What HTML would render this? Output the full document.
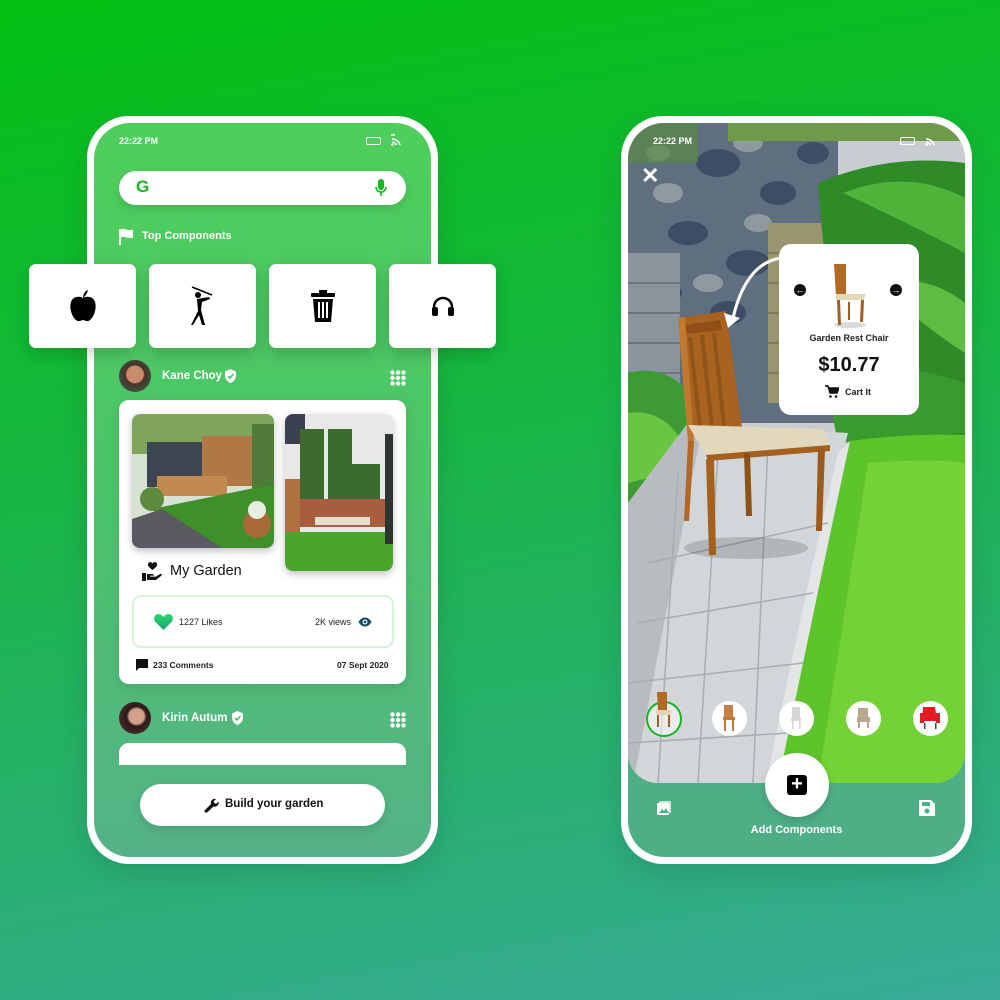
<!DOCTYPE html>
<html><head><meta charset="utf-8"><style>
*{margin:0;padding:0;box-sizing:border-box}
body{width:1000px;height:1000px;overflow:hidden;font-family:"Liberation Sans",sans-serif;background:linear-gradient(170deg,#03c013 0%,#14b83a 35%,#27b06c 70%,#38ab98 100%);position:relative}
.abs{position:absolute}
.frame{position:absolute;background:#fff;border-radius:42px;box-shadow:0 10px 30px rgba(0,0,0,.12)}
.lin{position:absolute;left:94px;top:123px;width:337px;height:734px;border-radius:36px;background:linear-gradient(180deg,#4ecf5b 0%,#4cc46a 50%,#55b287 100%);overflow:hidden}
.w{color:#fff}
.tile{position:absolute;top:264px;width:107px;height:84px;background:#fff;border-radius:7px;box-shadow:0 6px 16px rgba(0,0,0,.18);display:flex;align-items:center;justify-content:center}
.sm{font-size:9px;font-weight:bold}
</style></head><body>

<!-- LEFT PHONE -->
<div class="frame" style="left:87px;top:116px;width:351px;height:748px"></div>
<div class="lin">
  <div class="abs w sm" style="left:25px;top:13px;font-size:9px">22:22 PM</div>
  <div class="abs" style="left:272px;top:14px;width:15px;height:8px;border:1.5px solid #fff;border-radius:2px"></div>
  <svg class="abs" style="left:296px;top:11px" width="14" height="12" viewBox="0 0 14 12"><path d="M2 5a8 8 0 0 1 8 6M2 8a4 4 0 0 1 4 3" stroke="#fff" stroke-width="1.6" fill="none"/><circle cx="2.5" cy="10.5" r="1.3" fill="#fff"/><path d="M1 1h4" stroke="#fff" stroke-width="1.5"/></svg>
  <div class="abs" style="left:25px;top:48px;width:287px;height:34px;background:#fff;border-radius:17px;box-shadow:0 4px 10px rgba(0,0,0,.12)"></div>
  <div class="abs" style="left:42px;top:54px;color:#12b81e;font-weight:bold;font-size:17px">G</div>
  <svg class="abs" style="left:281px;top:56px" width="12" height="18" viewBox="0 0 12 18"><rect x="3" y="0" width="6" height="11" rx="3" fill="#12b81e"/><path d="M1 8a5 5 0 0 0 10 0M6 13v4" stroke="#12b81e" stroke-width="1.6" fill="none"/></svg>
  <svg class="abs" style="left:25px;top:105px" width="16" height="17" viewBox="0 0 16 17"><path d="M1 1v16" stroke="#fff" stroke-width="2"/><path d="M2 1.5c4-2 6 2 12 0v8c-6 2-8-2-12 0z" fill="#fff"/></svg>
  <div class="abs w" style="left:48px;top:107px;font-size:11px;font-weight:bold">Top Components</div>

  <div class="abs" style="left:25px;top:237px;width:32px;height:32px;border-radius:50%;background:radial-gradient(circle at 50% 45%,#c88b6b 0 35%,#4a3226 40%,#2f6a5a 100%)"></div>
  <div class="abs w" style="left:68px;top:247px;font-size:11.5px;font-weight:bold">Kane Choy</div>
  <svg class="abs" style="left:130px;top:246px" width="13" height="14" viewBox="0 0 13 14"><path d="M6.5 0L12 2.5v4c0 4-3 6.5-5.5 7.5C4 13 1 10.5 1 6.5v-4z" fill="#fff"/><path d="M4 7l2 2 3.5-4" stroke="#4cc56a" stroke-width="1.6" fill="none"/></svg>
  <svg class="abs" style="left:296px;top:247px" width="16" height="16" viewBox="0 0 16 16" fill="#fff"><circle cx="2.5" cy="2.5" r="2.2"/><circle cx="8" cy="2.5" r="2.2"/><circle cx="13.5" cy="2.5" r="2.2"/><circle cx="2.5" cy="8" r="2.2"/><circle cx="8" cy="8" r="2.2"/><circle cx="13.5" cy="8" r="2.2"/><circle cx="2.5" cy="13.5" r="2.2"/><circle cx="8" cy="13.5" r="2.2"/><circle cx="13.5" cy="13.5" r="2.2"/></svg>

  <div class="abs" style="left:25px;top:277px;width:287px;height:284px;background:#fff;border-radius:10px;box-shadow:0 4px 12px rgba(0,0,0,.1)">
    <svg class="abs" style="left:13px;top:14px;border-radius:8px;box-shadow:0 3px 8px rgba(0,0,0,.25)" width="142" height="134" viewBox="0 0 142 134"><rect width="142" height="134" fill="#d8e2d4"/><rect x="0" y="0" width="142" height="40" fill="#7ea55a"/><rect x="15" y="28" width="70" height="45" fill="#3e4452"/><rect x="70" y="22" width="55" height="50" fill="#b07845"/><rect x="120" y="10" width="22" height="70" fill="#4f7a3a"/><rect x="25" y="62" width="70" height="20" fill="#c08a50"/><polygon points="20,95 142,70 142,134 60,134" fill="#3f8f2a"/><polygon points="0,105 30,95 90,134 0,134" fill="#5a5a60"/><circle cx="125" cy="110" r="14" fill="#a9683a"/><circle cx="20" cy="85" r="12" fill="#5e8a3e"/><circle cx="125" cy="96" r="9" fill="#e6efe0"/></svg>
    <svg class="abs" style="left:166px;top:14px;border-radius:8px;box-shadow:0 3px 8px rgba(0,0,0,.25)" width="108" height="157" viewBox="0 0 108 157"><rect width="108" height="157" fill="#e8e8e6"/><rect x="0" y="0" width="20" height="30" fill="#3b4050"/><rect x="15" y="15" width="24" height="70" fill="#3d6a2e"/><rect x="43" y="15" width="24" height="70" fill="#3a6a2c"/><rect x="65" y="50" width="30" height="38" fill="#3b6a2e"/><rect x="0" y="65" width="15" height="60" fill="#b07040"/><rect x="15" y="85" width="85" height="28" fill="#a85e3e"/><rect x="30" y="103" width="55" height="8" fill="#e8dcd0"/><rect x="0" y="118" width="108" height="39" fill="#49a52c"/><rect x="100" y="20" width="8" height="110" fill="#2d3530"/></svg>
    <svg class="abs" style="left:23px;top:161px" width="21" height="20" viewBox="0 0 21 20"><path d="M10.5 9C6 5.5 5 4 6.5 2c1.3-1.6 3-1 4 .5 1-1.5 2.7-2.1 4-.5 1.5 2 .5 3.5-4 7z" fill="#111"/><path d="M0 12h4v8H0zM5 13h5c1.2 0 2 .8 2 1.6H8v1h6l4-2.5c1-.6 2.5.2 1.5 1.4L14 19H5z" fill="#111"/></svg>
    <div class="abs" style="left:51px;top:163px;font-size:14.5px;color:#111">My Garden</div>
    <div class="abs" style="left:13px;top:195px;width:262px;height:53px;border:2px solid #d4f3d8;border-radius:9px"></div>
    <svg class="abs" style="left:35px;top:213px" width="19" height="17" viewBox="0 0 19 17"><defs><linearGradient id="hg" x1="0" y1="0" x2="0" y2="1"><stop offset="0" stop-color="#2fd86a"/><stop offset="1" stop-color="#10a37a"/></linearGradient></defs><path d="M9.5 17L1.5 9C-1 6.5 0 1 4.5 1c2.3 0 4 1.5 5 3 1-1.5 2.7-3 5-3C19 1 20 6.5 17.5 9z" fill="url(#hg)"/></svg>
    <div class="abs" style="left:60px;top:217px;font-size:9px;color:#222">1227 Likes</div>
    <div class="abs" style="left:196px;top:217px;font-size:9px;color:#222">2K views</div>
    <svg class="abs" style="left:239px;top:217px" width="14" height="10" viewBox="0 0 14 10"><path d="M0.5 5C2.5 1.5 5 .5 7 .5s4.5 1 6.5 4.5C11.5 8.5 9 9.5 7 9.5S2.5 8.5.5 5z" fill="#154a66"/><circle cx="7" cy="5" r="2.5" fill="#fff"/><circle cx="7" cy="5" r="1.4" fill="#154a66"/></svg>
    <svg class="abs" style="left:17px;top:259px" width="12" height="12" viewBox="0 0 12 12"><path d="M0 0h12v9H3l-3 3z" fill="#111"/></svg>
    <div class="abs" style="left:34px;top:260px;font-size:8.5px;color:#222;font-weight:bold">233 Comments</div>
    <div class="abs" style="left:218px;top:260px;font-size:8.5px;color:#222;font-weight:bold">07 Sept 2020</div>
  </div>

  <div class="abs" style="left:25px;top:579px;width:32px;height:32px;border-radius:50%;background:radial-gradient(circle at 55% 45%,#d3a08a 0 30%,#2b1a18 40%,#5a3a40 100%)"></div>
  <div class="abs w" style="left:68px;top:589px;font-size:11.5px;font-weight:bold">Kirin Autum</div>
  <svg class="abs" style="left:137px;top:588px" width="13" height="14" viewBox="0 0 13 14"><path d="M6.5 0L12 2.5v4c0 4-3 6.5-5.5 7.5C4 13 1 10.5 1 6.5v-4z" fill="#fff"/><path d="M4 7l2 2 3.5-4" stroke="#4cc56a" stroke-width="1.6" fill="none"/></svg>
  <svg class="abs" style="left:296px;top:589px" width="16" height="16" viewBox="0 0 16 16" fill="#fff"><circle cx="2.5" cy="2.5" r="2.2"/><circle cx="8" cy="2.5" r="2.2"/><circle cx="13.5" cy="2.5" r="2.2"/><circle cx="2.5" cy="8" r="2.2"/><circle cx="8" cy="8" r="2.2"/><circle cx="13.5" cy="8" r="2.2"/><circle cx="2.5" cy="13.5" r="2.2"/><circle cx="8" cy="13.5" r="2.2"/><circle cx="13.5" cy="13.5" r="2.2"/></svg>
  <div class="abs" style="left:25px;top:620px;width:287px;height:22px;background:#fff;border-radius:10px 10px 0 0"></div>

  <div class="abs" style="left:46px;top:661px;width:245px;height:42px;background:#fff;border-radius:21px;box-shadow:0 4px 10px rgba(0,0,0,.12)"></div>
  <svg class="abs" style="left:108px;top:673px" width="17" height="17" viewBox="0 0 17 17"><path d="M2 15L9 8a4 4 0 0 1 5-5l-2.5 2.5 1 1.5 1.5 1 2.5-2.5a4 4 0 0 1-5 5L4.5 17z" fill="#111"/></svg>
  <div class="abs" style="left:131px;top:675px;font-size:11.5px;font-weight:bold;color:#111">Build your garden</div>
</div>

<div class="tile" style="left:29px"><svg width="30" height="34" viewBox="0 0 30 34"><path d="M15 9c-3-2-10-2-12 4s1 15 5 18c2 2 4 1 7 0 3 1 5 2 7 0 4-3 7-12 5-18s-9-6-12-4z" fill="#000"/><path d="M15 9c0-4 2-7 5-8-1 4-3 6-5 8z" fill="#000"/></svg></div>
<div class="tile" style="left:149px"><svg width="26" height="40" viewBox="0 0 26 40"><circle cx="8" cy="9" r="3" fill="#000"/><path d="M2 1l20 8" stroke="#000" stroke-width="1.5"/><path d="M7 13l12-2 1 2-8 3-1 8 4 15h-3l-3-10-6 10H1l7-14z" fill="#000"/></svg></div>
<div class="tile" style="left:269px"><svg width="24" height="32" viewBox="0 0 24 32"><rect x="8" y="0" width="8" height="3" fill="#000"/><rect x="0" y="3" width="24" height="4" rx="1" fill="#000"/><path d="M2 9h20l-2 23H4z" fill="#000"/><path d="M8 12v16M12 12v16M16 12v16" stroke="#fff" stroke-width="2"/></svg></div>
<div class="tile" style="left:389px"><svg width="24" height="22" viewBox="0 0 24 22"><path d="M3 16V12a9 9 0 0 1 18 0v4" stroke="#000" stroke-width="2.5" fill="none"/><rect x="1" y="12" width="6" height="9" rx="2" fill="#000"/><rect x="17" y="12" width="6" height="9" rx="2" fill="#000"/></svg></div>

<!-- RIGHT PHONE -->
<div class="frame" style="left:621px;top:116px;width:351px;height:748px"></div>
<div class="abs" style="left:628px;top:123px;width:337px;height:734px;border-radius:36px;background:linear-gradient(180deg,#4fb28a,#4eae86);overflow:hidden">
  <svg class="abs" style="left:0;top:0;border-radius:0 0 30px 30px" width="337" height="660" viewBox="0 0 337 660">
    <rect width="337" height="660" fill="#c9cdd1"/>
    <!-- stone wall -->
    <rect x="0" y="0" width="210" height="300" fill="#5f6f80"/>
    <g fill="#3d4d64"><ellipse cx="90" cy="40" rx="22" ry="14"/><ellipse cx="150" cy="70" rx="18" ry="12"/><ellipse cx="60" cy="110" rx="20" ry="12"/><ellipse cx="120" cy="140" rx="22" ry="13"/><ellipse cx="185" cy="30" rx="16" ry="11"/><ellipse cx="175" cy="110" rx="16" ry="10"/><ellipse cx="100" cy="190" rx="18" ry="12"/><ellipse cx="40" cy="170" rx="14" ry="9"/></g>
    <g fill="#8f9aa0"><ellipse cx="120" cy="20" rx="15" ry="9"/><ellipse cx="40" cy="70" rx="15" ry="10"/><ellipse cx="130" cy="100" rx="14" ry="9"/><ellipse cx="80" cy="160" rx="15" ry="9"/><ellipse cx="160" cy="170" rx="15" ry="9"/><ellipse cx="30" cy="30" rx="12" ry="8"/></g>
    <rect x="0" y="0" width="70" height="40" fill="#5a8a45" opacity=".7"/>
    <rect x="100" y="0" width="237" height="18" fill="#6f9a4a"/>
    <rect x="140" y="100" width="90" height="180" fill="#9a9570"/>
    <g stroke="#7e7a5a" stroke-width="2"><path d="M140 130h90M140 160h90M140 190h90M140 220h90M140 250h90"/></g>
    <!-- right bushes -->
    <path d="M190 60 Q260 30 337 40 L337 340 L230 330 Q200 200 190 60z" fill="#2f8a28"/>
    <path d="M215 70 Q280 45 337 75 L337 130 Q280 100 215 70z" fill="#4fb43a"/>
    <path d="M250 160 Q300 150 337 180 L337 230 Q290 200 250 160z" fill="#5cbd40"/>
    <path d="M200 270 Q250 230 337 260 L337 310 L210 320z" fill="#3a9a2e"/>
    <!-- stairs -->
    <rect x="0" y="130" width="52" height="140" fill="#8a949c"/>
    <g stroke="#6c757c" stroke-width="2"><path d="M0 160h52M0 190h52M0 220h52M0 250h52"/></g>
    <!-- left bushes -->
    <path d="M0 250 Q40 240 65 275 L60 360 L0 380z" fill="#3e9a32"/>
    <path d="M0 290 Q35 285 55 320 L40 350 L0 360z" fill="#6cc443"/>
    <!-- path -->
    <path d="M60 300 L220 310 Q190 420 150 660 L0 660 L0 380z" fill="#d3d6d9"/>
    <path d="M60 300 L75 300 L5 660 L0 660 L0 380z" fill="#b8bcc0"/>
    <!-- grass -->
    <path d="M222 318 Q280 310 337 312 L337 660 L140 660 Q165 520 195 420 Q210 360 222 318z" fill="#5dc42b"/>
    <path d="M240 340 Q300 335 337 340 L337 660 L190 660 Q215 500 240 340z" fill="#7fd93c" opacity=".7"/>
    <path d="M210 330 L222 318 Q200 420 150 660 L138 660 Q175 480 210 330z" fill="#e3e5e7"/>
    <g stroke="#a8adb2" stroke-width="1.5" fill="none"><path d="M20 440 L200 400"/><path d="M10 500 L185 470"/><path d="M0 560 L175 540"/><path d="M0 620 L160 610"/><path d="M90 330 L70 660"/><path d="M140 320 L125 660"/><path d="M50 350 L30 660"/></g>
    <!-- chair -->
    <ellipse cx="118" cy="425" rx="62" ry="11" fill="#000" opacity=".15"/>
    <path d="M50 195 L98 188 L114 305 L60 312z" fill="#a96320"/>
    <path d="M57 202 L92 197 L94 207 L59 211z" fill="#8f4f17"/>
    <path d="M62 214 L72 305M74 212 L84 304M86 210 L96 302" stroke="#8f5418" stroke-width="4"/>
    <path d="M50 195 L57 194 L66 318 L60 320z" fill="#c07a30"/>
    <path d="M60 302 L195 306 L202 322 L78 332z" fill="#e2d8bc"/>
    <path d="M78 332 L202 322 L202 328 L80 338z" fill="#a4601f"/>
    <path d="M78 336 L86 336 L88 432 L81 432z" fill="#a4601f"/>
    <path d="M190 326 L197 326 L194 408 L188 408z" fill="#9c5a1c"/>
    <path d="M116 330 L122 330 L124 393 L118 393z" fill="#8d5016"/>
    <path d="M60 318 L66 318 L61 398 L56 398z" fill="#b06824"/>
    <path d="M153 135 Q118 140 105 195" stroke="#fff" stroke-width="3" fill="none"/>
    <path d="M96 190 L112 195 L100 205z" fill="#fff"/>
  </svg>
  <div class="abs w sm" style="left:25px;top:13px">22:22 PM</div>
  <div class="abs" style="left:272px;top:14px;width:15px;height:8px;border:1.5px solid #fff;border-radius:2px"></div>
  <svg class="abs" style="left:296px;top:11px" width="14" height="12" viewBox="0 0 14 12"><path d="M2 5a8 8 0 0 1 8 6M2 8a4 4 0 0 1 4 3" stroke="#fff" stroke-width="1.6" fill="none"/><circle cx="2.5" cy="10.5" r="1.3" fill="#fff"/></svg>
  <div class="abs w" style="left:13px;top:40px;font-size:22px;font-weight:bold">✕</div>

  <div class="abs" style="left:151px;top:121px;width:140px;height:171px;background:#fff;border-radius:12px">
    <svg class="abs" style="left:49px;top:18px" width="40" height="66" viewBox="0 0 40 66"><ellipse cx="22" cy="63" rx="16" ry="3" fill="#000" opacity=".15"/><path d="M6 2h12v32H8z" fill="#b06a25"/><path d="M8 32h30l-2 6H8z" fill="#e3d8b8"/><path d="M9 38h3l1 25h-3zM33 38h3l-1 22h-3zM20 40h2v18h-2z" fill="#a05f20"/></svg>
    <div class="abs" style="left:15px;top:40px;width:12px;height:12px;border-radius:50%;background:#111;color:#fff;font-size:9px;line-height:12px;text-align:center">←</div>
    <div class="abs" style="left:111px;top:40px;width:12px;height:12px;border-radius:50%;background:#111;color:#fff;font-size:9px;line-height:12px;text-align:center">→</div>
    <div class="abs" style="left:0;top:89px;width:140px;text-align:center;font-size:9px;font-weight:bold;color:#222">Garden Rest Chair</div>
    <div class="abs" style="left:0;top:110px;width:140px;text-align:center;font-size:20px;font-weight:bold;color:#111">$10.77</div>
    <svg class="abs" style="left:46px;top:141px" width="14" height="13" viewBox="0 0 14 13"><path d="M0 1h3l2 7h7l2-5H4" stroke="#111" stroke-width="1.5" fill="#111"/><circle cx="5.5" cy="11.5" r="1.3" fill="#111"/><circle cx="11" cy="11.5" r="1.3" fill="#111"/></svg>
    <div class="abs" style="left:66px;top:143px;font-size:9px;font-weight:bold;color:#222">Cart It</div>
  </div>

  <div class="abs" style="left:18px;top:578px;width:36px;height:36px;border-radius:50%;border:2.5px solid #16b51f;background:rgba(255,255,255,.5)"></div>
  <svg class="abs" style="left:26px;top:569px" width="18" height="36" viewBox="0 0 18 36"><path d="M3 0h10v20H4z" fill="#b06a25"/><path d="M2 18h15v5H2z" fill="#e0d4b4"/><path d="M3 23h2v12H3zM14 23h2v12h-2z" fill="#a05f20"/></svg>
  <div class="abs" style="left:84px;top:578px;width:35px;height:35px;border-radius:50%;background:#fff"></div>
  <svg class="abs" style="left:93px;top:582px" width="16" height="26" viewBox="0 0 16 26"><path d="M3 0h9v13H3z" fill="#c57f45"/><path d="M2 12h12v3H2zM3 15h2v11H3zM11 15h2v11h-2z" fill="#c07a40"/></svg>
  <div class="abs" style="left:151px;top:578px;width:35px;height:35px;border-radius:50%;background:#fff"></div>
  <svg class="abs" style="left:161px;top:584px" width="14" height="22" viewBox="0 0 14 22"><path d="M3 0h8v11H3zM2 11h10v3H2zM3 14h1.5v8H3zM10 14h1.5v8H10z" fill="#d6d6d6"/></svg>
  <div class="abs" style="left:218px;top:578px;width:35px;height:35px;border-radius:50%;background:#fff"></div>
  <svg class="abs" style="left:228px;top:585px" width="15" height="20" viewBox="0 0 15 20"><path d="M2 0h10v10H2zM1 9h13v5H1zM2 14h2v6H2zM11 14h2v6h-2z" fill="#b9a890"/></svg>
  <div class="abs" style="left:285px;top:578px;width:35px;height:35px;border-radius:50%;background:#fff"></div>
  <svg class="abs" style="left:292px;top:584px" width="20" height="22" viewBox="0 0 20 22"><path d="M3 0h12l2 14H2zM0 6h4v10H0zM16 6h4v10h-4z" fill="#e21c24"/><path d="M4 16h1.5v6H4zM15 16h1.5v6H15z" fill="#444"/></svg>

  <div class="abs" style="left:137px;top:630px;width:64px;height:64px;border-radius:50%;background:#fff;box-shadow:0 3px 8px rgba(0,0,0,.15)"></div>
  <div class="abs" style="left:159px;top:652px;width:20px;height:20px;background:#000;border-radius:3px;color:#fff;font-size:20px;line-height:19px;text-align:center;font-weight:bold">+</div>
  <svg class="abs" style="left:29px;top:678px" width="14" height="14" viewBox="0 0 14 14"><rect x="2" y="0" width="12" height="12" rx="1.5" fill="#fff" opacity=".7"/><rect x="0" y="2" width="12" height="12" rx="1.5" fill="#fff"/><path d="M2 12l3-4 2 2 2-3 3 5z" fill="#4eae86"/></svg>
  <svg class="abs" style="left:291px;top:677px" width="16" height="16" viewBox="0 0 16 16"><path d="M0 0h12l4 4v12H0z" fill="#fff"/><rect x="3" y="2" width="8" height="4" fill="#4eae86"/><circle cx="8" cy="11" r="2.5" fill="#4eae86"/></svg>
  <div class="abs w" style="left:0;top:701px;width:337px;text-align:center;font-size:11px;font-weight:bold">Add Components</div>
</div>
</body></html>
